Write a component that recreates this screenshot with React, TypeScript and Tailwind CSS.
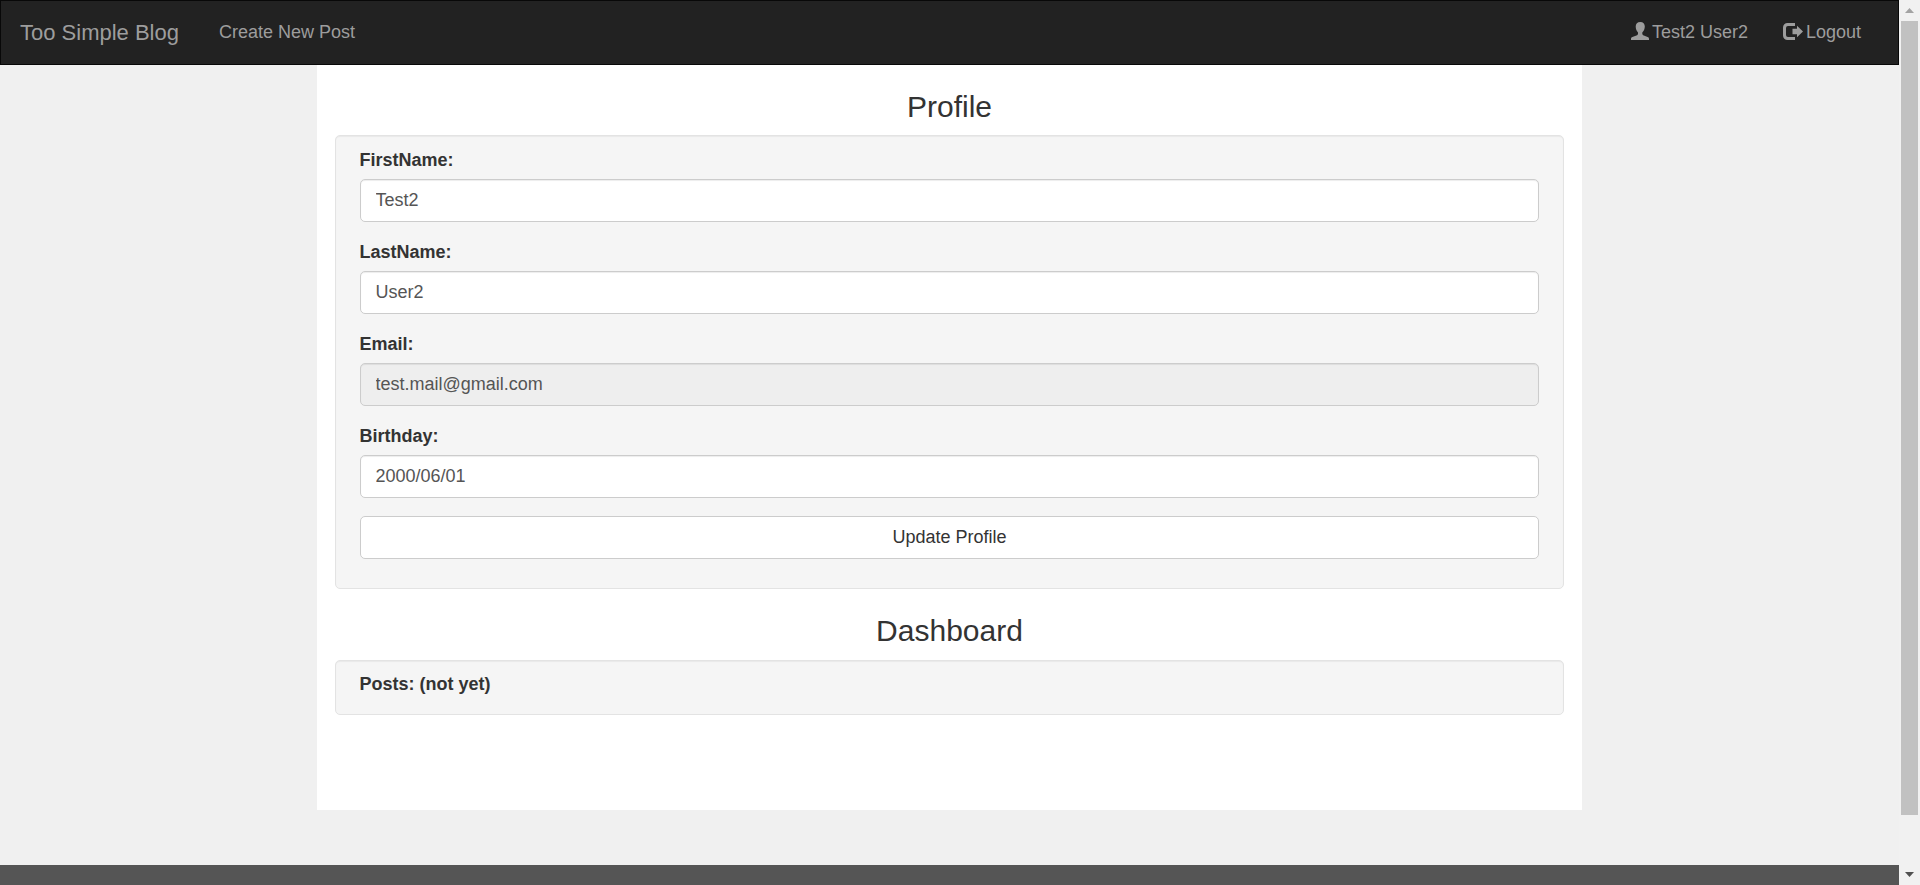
import React from "react";

const inputClass =
  "block h-[43px] w-full rounded-[5px] border border-[#cccccc] bg-white px-[15px] pb-px text-[#555555] shadow-[inset_0_1px_1px_rgba(0,0,0,0.075)] outline-none focus:border-[#66afe9] read-only:bg-[#eeeeee]";

const wellClass =
  "rounded-[5px] border border-[#e3e3e3] bg-[#f5f5f5] px-6 shadow-[inset_0_1px_1px_rgba(0,0,0,0.05)]";

const fields = [
  { id: "firstName", label: "FirstName:", value: "Test2", readOnly: false },
  { id: "lastName", label: "LastName:", value: "User2", readOnly: false },
  { id: "email", label: "Email:", value: "test.mail@gmail.com", readOnly: true },
  { id: "birthday", label: "Birthday:", value: "2000/06/01", readOnly: false },
];

function UserIcon() {
  return (
    <svg className="mb-1 h-[18px] w-[18px]" viewBox="0 0 18 18" fill="currentColor" aria-hidden="true">
      <path d="M9.300 0C6.300 0 4.700 1.800 4.700 4.600c0 2.600 1 4.600 2.300 6v1.200c0 .7-.3 1.100-.9 1.400L1.400 15.100C.4 15.500 0 16 0 17v1h18v-1c0-1-.4-1.500-1.400-1.900l-4.400-1.900c-.6-.3-.9-.7-.9-1.400v-1.200c1.400-1.400 2.500-3.400 2.500-6C13.800 1.800 12.200 0 9.300 0z" />
    </svg>
  );
}

function LogoutIcon() {
  return (
    <svg className="mb-1 h-[18px] w-[20px]" viewBox="0 0 20 18" fill="currentColor" aria-hidden="true">
      <path d="M12 1H4.500A4.500 4.500 0 0 0 0 5.500v8A4.500 4.500 0 0 0 4.500 18H12v-3H5a2 2 0 0 1-2-2V6a2 2 0 0 1 2-2h7z" />
      <path d="M14 3.800v3H9.500v5.400H14v3l6-5.700z" />
    </svg>
  );
}

function Navbar() {
  return (
    <nav className="flex h-[65px] items-center border border-[#080808] bg-[#222222] pr-[37px] pl-[19px] text-[#9d9d9d]">
      <a href="#home" className="text-[22px] leading-[25px]">
        Too Simple Blog
      </a>
      <a href="#new" className="ml-10">
        Create New Post
      </a>
      <div className="ml-auto flex items-center gap-[35px]">
        <a href="#profile" className="flex items-center gap-[3px]">
          <UserIcon />
          Test2 User2
        </a>
        <a href="#logout" className="flex items-center gap-[3px]">
          <LogoutIcon />
          Logout
        </a>
      </div>
    </nav>
  );
}

function ScrollRail() {
  return (
    <div className="flex w-[21px] shrink-0 flex-col items-center bg-[#f1f1f1]" aria-hidden="true">
      <div className="flex h-[21px] items-center">
        <svg className="h-[5px] w-[9px]" viewBox="0 0 9 5" fill="#a3a3a3">
          <path d="M4.500 0 9 5H0z" />
        </svg>
      </div>
      <div className="w-[17px] flex-1 bg-[#c1c1c1]" />
      <div className="h-[49px]" />
      <div className="flex h-[21px] items-center">
        <svg className="h-[5px] w-[9px]" viewBox="0 0 9 5" fill="#505050">
          <path d="M0 0h9L4.500 5z" />
        </svg>
      </div>
    </div>
  );
}

export default function App() {
  return (
    <div className="flex h-screen bg-[#f0f0f0] font-['Liberation_Sans',Arial,sans-serif] text-[18px] leading-[25px] text-[#333333]">
      <div className="min-w-0 flex-1 overflow-y-auto [scrollbar-width:none]">
        <Navbar />
        <main className="mx-auto w-2/3 bg-white px-[18px] pt-[25px] pb-[95px]">
          <h3 className="mb-[11px] text-center text-[30px] leading-[34px]">Profile</h3>
          <form className={wellClass + " pt-3 pb-[29px]"} onSubmit={(event) => event.preventDefault()}>
            {fields.map((field) => (
              <div key={field.id} className="mb-[18px]">
                <label htmlFor={field.id} className="mb-[6px] block font-bold">
                  {field.label}
                </label>
                <input
                  id={field.id}
                  type="text"
                  defaultValue={field.value}
                  readOnly={field.readOnly}
                  className={inputClass}
                />
              </div>
            ))}
            <button
              type="submit"
              className="block h-[43px] w-full cursor-pointer rounded-[5px] border border-[#cccccc] bg-white hover:bg-[#e6e6e6]"
            >
              Update Profile
            </button>
          </form>
          <h3 className="mt-[25px] mb-3 text-center text-[30px] leading-[34px]">Dashboard</h3>
          <section className={wellClass + " pt-[11px] pb-[17px]"}>
            <p className="font-bold">Posts: (not yet)</p>
          </section>
        </main>
        <footer className="mt-[55px] h-[75px] bg-[#555555]" />
      </div>
      <ScrollRail />
    </div>
  );
}
